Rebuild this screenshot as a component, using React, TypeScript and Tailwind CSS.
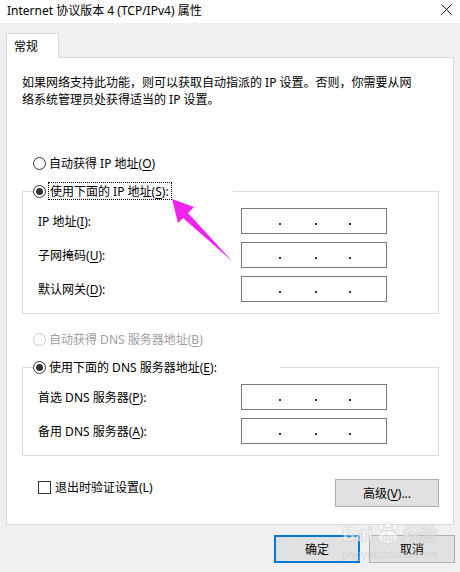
import React from "react";

const FONT = "font-['Noto_Sans','Noto_Sans_CJK_SC',sans-serif]";

function Radio({ checked = false, disabled = false }: { checked?: boolean; disabled?: boolean }) {
  return (
    <span
      className={
        "flex h-[13px] w-[13px] shrink-0 items-center justify-center rounded-full border bg-white " +
        (disabled ? "border-[#c6c6c6]" : "border-[#333333]")
      }
    >
      {checked && <span className="h-[7px] w-[7px] rounded-full bg-[#333333]" />}
    </span>
  );
}

function IpBox() {
  return (
    <div className="flex h-[26px] w-[146px] items-start border border-[#7a7a7a] bg-white pt-[14px] pl-[37px]">
      <span className="h-[2px] w-[2px] bg-[#333]" />
      <span className="ml-[34px] h-[2px] w-[2px] bg-[#333]" />
      <span className="ml-[32px] h-[2px] w-[2px] bg-[#333]" />
    </div>
  );
}

function Key({ k }: { k: string }) {
  return (
    <>
      (<span className="underline underline-offset-2">{k}</span>)
    </>
  );
}

const IP_ROWS = [
  { label: "IP 地址", key: "I" },
  { label: "子网掩码", key: "U" },
  { label: "默认网关", key: "D" },
];

const DNS_ROWS = [
  { label: "首选 DNS 服务器", key: "P" },
  { label: "备用 DNS 服务器", key: "A" },
];

export default function App() {
  return (
    <div className={"relative h-[572px] w-[460px] overflow-hidden bg-[#f0f0f0] text-[12px] leading-[17px] text-black " + FONT}>
      {/* 标题栏 */}
      <div className="flex h-[23px] items-start justify-between bg-white pl-[7px] pt-[2px]">
        <span>Internet 协议版本 4 (TCP/IPv4) 属性</span>
        <svg width="11" height="11" viewBox="0 0 11 11" className="mt-[2px] mr-[8px]">
          <path d="M0.5 0.5 L10.5 10.5 M10.5 0.5 L0.5 10.5" stroke="#111" strokeWidth="1" />
        </svg>
      </div>

      {/* 选项卡 */}
      <div className="px-[6px] pt-[10px]">
        <div className="relative z-10 -mb-px flex h-[25px] w-[53px] items-center border border-b-0 border-[#d9d9d9] bg-white pl-[7px]">
          常规
        </div>

        <div className="h-[468px] border border-[#d9d9d9] bg-white">
          <p className="ml-[15px] mt-[16px] whitespace-nowrap">
            如果网络支持此功能，则可以获取自动指派的 IP 设置。否则，你需要从网
            <br />
            络系统管理员处获得适当的 IP 设置。
          </p>

          <div className="ml-[26px] mt-[46px] flex h-[18px] items-center gap-[3px]">
            <Radio />
            <span>
              自动获得 IP 地址<Key k="O" />
            </span>
          </div>

          <fieldset className="ml-[15px] mt-[10px] w-[417px] border border-[#dcdcdc]">
            <legend className="ml-[10px] flex h-[18px] w-[200px] items-center bg-white">
              <Radio checked />
              <span className="ml-[2px] flex h-[18px] items-center border border-dotted border-black pl-px pr-[2px]">
                使用下面的 IP 地址<Key k="S" />:
              </span>
            </legend>
            <div className="flex flex-col gap-[8px] pb-[11px] pl-[15px] pt-[8px]">
              {IP_ROWS.map((r) => (
                <div key={r.key} className="flex h-[26px] items-center">
                  <span className="w-[203px]">
                    {r.label}
                    <Key k={r.key} />:
                  </span>
                  <IpBox />
                </div>
              ))}
            </div>
          </fieldset>

          <div className="ml-[26px] mt-[16px] flex h-[18px] items-center gap-[3px] text-[#a0a0a0]">
            <Radio disabled />
            <span>
              自动获得 DNS 服务器地址<Key k="B" />
            </span>
          </div>

          <fieldset className="ml-[15px] mt-[10px] w-[417px] border border-[#dcdcdc]">
            <legend className="ml-[10px] flex h-[18px] w-[247px] items-center gap-[3px] bg-white">
              <Radio checked />
              <span>
                使用下面的 DNS 服务器地址<Key k="E" />:
              </span>
            </legend>
            <div className="flex flex-col gap-[8px] pb-[11px] pl-[15px] pt-[8px]">
              {DNS_ROWS.map((r) => (
                <div key={r.key} className="flex h-[26px] items-center">
                  <span className="w-[203px]">
                    {r.label}
                    <Key k={r.key} />:
                  </span>
                  <IpBox />
                </div>
              ))}
            </div>
          </fieldset>

          <div className="ml-[15px] mt-[23px] flex w-[417px] items-start justify-between pl-[16px]">
            <div className="flex h-[17px] items-center gap-[4px]">
              <span className="h-[13px] w-[13px] border border-[#333] bg-white" />
              <span>退出时验证设置(L)</span>
            </div>
            <button className="flex h-[28px] w-[104px] items-center justify-center border border-[#adadad] bg-[#e1e1e1]">
              高级<Key k="V" />...
            </button>
          </div>
        </div>
      </div>

      {/* 底部按钮 */}
      <div className="mt-[10px] flex justify-end gap-[9px] pr-[5px]">
        <button className="flex h-[28px] w-[86px] items-center justify-center border-2 border-[#0078d7] bg-[#e1e1e1]">
          确定
        </button>
        <button className="flex h-[28px] w-[86px] items-center justify-center border border-[#adadad] bg-[#e1e1e1]">
          取消
        </button>
      </div>

      {/* 标注箭头 */}
      <svg className="pointer-events-none absolute left-0 top-0" width="460" height="572">
        <polygon points="172,199 194,207 188,213 232,261 183,218 178,223" fill="#ef22ef" />
      </svg>

      {/* 水印 */}
      <div className="pointer-events-none absolute left-[342px] top-[522px] flex flex-col items-start opacity-60">
        <div className="flex items-end gap-[2px] text-[20px] font-bold leading-[22px] text-white [-webkit-text-stroke:1px_#cfcfcf]">
          <span>Bai</span>
          <svg width="26" height="22" viewBox="0 0 26 22" className="mb-[1px]">
            <g fill="white" stroke="#cfcfcf" strokeWidth="1">
              <circle cx="6" cy="5" r="3" />
              <circle cx="13" cy="3" r="3" />
              <circle cx="20" cy="5" r="3" />
              <ellipse cx="13" cy="15" rx="10" ry="6.5" />
            </g>
            <text x="13" y="19" textAnchor="middle" fontSize="10" fontWeight="700" fill="#e0e0e0">du</text>
          </svg>
          <span className="text-[17px]">经验</span>
        </div>
        <span className="mt-[3px] text-[11px] leading-[12px] text-[#cdcdcd]">jingyan.baidu.com</span>
      </div>
    </div>
  );
}
